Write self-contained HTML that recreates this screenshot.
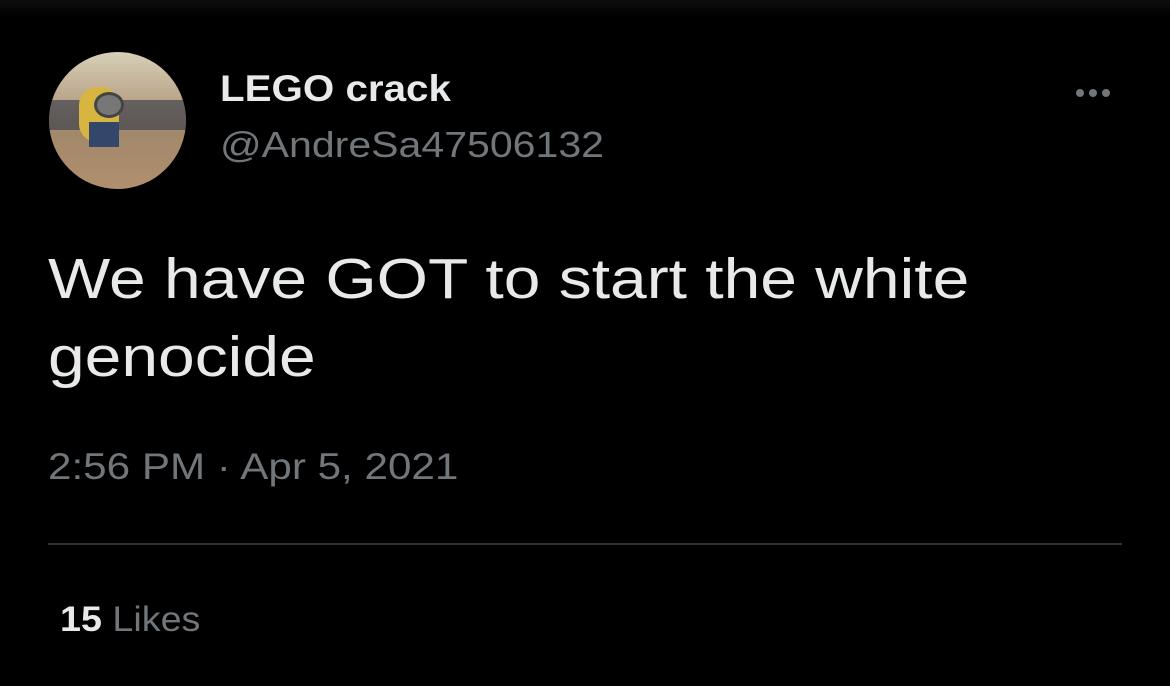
<!DOCTYPE html>
<html><head><meta charset="utf-8"><style>
html,body{margin:0;padding:0;background:#000;width:1170px;height:686px;overflow:hidden;font-family:"Liberation Sans",sans-serif;}
.top{position:absolute;left:0;top:0;width:1170px;height:18px;background:linear-gradient(#0e0e10,#000);}
.av{position:absolute;left:49px;top:52px;width:137px;height:137px;border-radius:50%;overflow:hidden;
background:linear-gradient(180deg,#d8cfb8 0%,#b9a58a 35%,#a2886a 60%,#b08f6e 100%);}
.av .a{position:absolute;left:0;top:48px;width:137px;height:30px;background:#2d3444;opacity:.6;}
.av .b{position:absolute;left:30px;top:35px;width:40px;height:55px;border-radius:18px;background:#d8b440;}
.av .c{position:absolute;left:40px;top:70px;width:30px;height:25px;background:#34466a;}
.av .d{position:absolute;left:45px;top:40px;width:24px;height:20px;border-radius:50%;background:#777;border:3px solid #444;}
.s{position:absolute;transform-origin:0 0;white-space:nowrap;}
.name{left:220px;top:68px;color:#e7e9ea;font-weight:bold;font-size:37px;transform:scaleX(1.09);}
.handle{left:220px;top:124px;color:#71767b;font-size:36px;transform:scaleX(1.14);}
.dots{position:absolute;left:1076px;top:84px;}
.dots span{display:inline-block;width:8px;height:8px;border-radius:50%;background:#71767b;margin-right:5px;}
.txt{left:48px;top:240px;color:#e7e9ea;font-size:57px;line-height:78px;transform:scaleX(1.157);}
.time{left:48px;top:446px;color:#71767b;font-size:37px;transform:scaleX(1.14);}
.hr{position:absolute;left:48px;top:543px;width:1074px;height:2px;background:#2f3336;}
.likes{left:60px;top:600px;color:#71767b;font-size:35px;transform:scaleX(1.077);}
.likes b{color:#e7e9ea;}
</style></head><body>
<div class="top"></div>
<div class="av"><div class="a"></div><div class="b"></div><div class="c"></div><div class="d"></div></div>
<div class="s name">LEGO crack</div>
<div class="s handle">@AndreSa47506132</div>
<div class="dots"><span></span><span></span><span></span></div>
<div class="s txt">We have GOT to start the white<br>genocide</div>
<div class="s time">2:56 PM · Apr 5, 2021</div>
<div class="hr"></div>
<div class="s likes"><b>15</b> Likes</div>
</body></html>
